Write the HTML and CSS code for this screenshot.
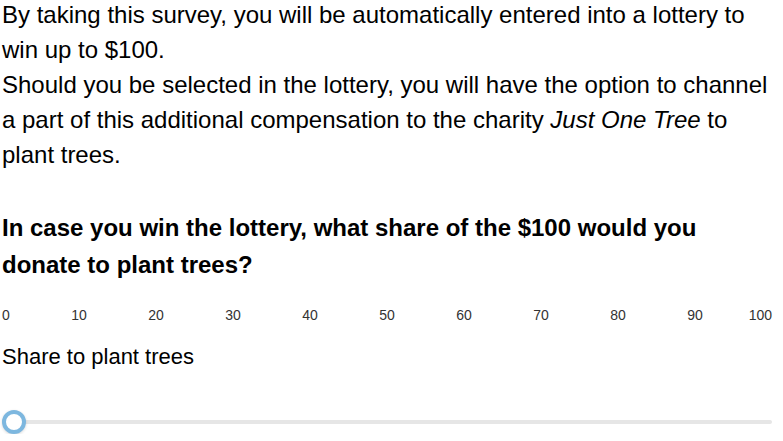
FILE: index.html
```html
<!DOCTYPE html>
<html>
<head>
<meta charset="utf-8">
<link rel="stylesheet" href="styles.css">
</head>
<body>
<div class="page">
  <p class="intro">By taking this survey, you will be automatically entered into a lottery to win up to $100.<br>Should you be selected in the lottery, you will have the option to channel a part of this additional compensation to the charity <em>Just One Tree</em> to plant trees.</p>
  <h2 class="question">In case you win the lottery, what share of the $100 would you donate to plant trees?</h2>
  <div class="ticks">
    <span class="tick first"><span>0</span></span>
    <span class="tick"><span>10</span></span>
    <span class="tick"><span>20</span></span>
    <span class="tick"><span>30</span></span>
    <span class="tick"><span>40</span></span>
    <span class="tick"><span>50</span></span>
    <span class="tick"><span>60</span></span>
    <span class="tick"><span>70</span></span>
    <span class="tick"><span>80</span></span>
    <span class="tick"><span>90</span></span>
    <span class="tick last"><span>100</span></span>
  </div>
  <div class="label">Share to plant trees</div>
  <div class="slider">
    <div class="track"></div>
    <div class="thumb"></div>
  </div>
</div>
</body>
</html>
```

FILE: styles.css
```css
html, body {
  margin: 0;
  padding: 0;
  background: #fff;
}
.page {
  padding: 0 11px 0 2px;
  font-family: "Liberation Sans", Arial, sans-serif;
  color: #000;
}
.intro {
  margin: -3px 0 0 0;
  font-size: 24px;
  line-height: 35px;
}
.question {
  margin: 37px 0 0 0;
  font-size: 24px;
  font-weight: bold;
  line-height: 37px;
}
.ticks {
  display: flex;
  justify-content: space-between;
  margin-top: 24px;
  height: 16px;
  line-height: 16px;
  font-size: 14px;
  color: #333;
}
.tick {
  width: 0;
  position: relative;
  white-space: nowrap;
}
.tick span {
  position: absolute;
  left: 0;
  top: 0;
  transform: translateX(-50%);
}
.tick.first span {
  transform: none;
}
.tick.last span {
  left: auto;
  right: 0;
  transform: none;
}
.label {
  margin-top: 19px;
  font-size: 22px;
  line-height: 30px;
}
.slider {
  position: relative;
  margin-top: 38px;
  height: 24px;
}
.track {
  position: absolute;
  left: 0;
  right: 0;
  top: 10px;
  height: 4px;
  border-radius: 2px;
  background: #e6e6e6;
}
.thumb {
  position: absolute;
  left: 0;
  top: 0;
  width: 16px;
  height: 16px;
  border: 4px solid #7db7df;
  border-radius: 50%;
  background: #fff;
  box-shadow: 0 1px 3px rgba(0,0,0,0.15);
}
```
